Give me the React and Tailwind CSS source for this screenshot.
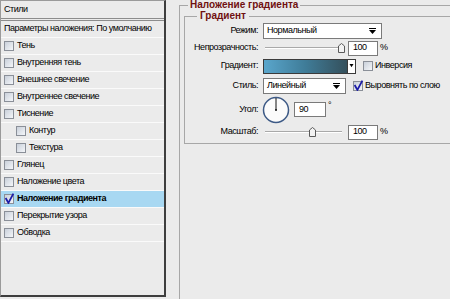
const layers = [
  { label: 'Тень' },
  { label: 'Внутренняя тень' },
  { label: 'Внешнее свечение' },
  { label: 'Внутреннее свечение' },
  { label: 'Тиснение' },
  { label: 'Контур', sub: true },
  { label: 'Текстура', sub: true },
  { label: 'Глянец' },
  { label: 'Наложение цвета' },
  { label: 'Наложение градиента', active: true },
  { label: 'Перекрытие узора' },
  { label: 'Обводка' },
];

function Check({ checked }) {
  return (
    <span className="relative flex h-[10px] w-[10px] shrink-0 border border-[#8a8f98] bg-gradient-to-br from-[#c9d0da] to-[#f4f6f9]">
      {checked && (
        <svg viewBox="0 0 10 10" className="absolute -left-px -top-[2px] h-[11px] w-[11px]">
          <path d="M1.5 4.5 L4 9 L8.5 0.5" fill="none" stroke="#1c1ca8" strokeWidth="1.6" />
        </svg>
      )}
    </span>
  );
}

function Arrow() {
  return (
    <svg viewBox="0 0 7 6" className="h-[6px] w-[7px]">
      <rect x="0" y="0" width="7" height="1" fill="#000" />
      <path d="M0 2 L7 2 L3.5 6 Z" fill="#000" />
    </svg>
  );
}

function Select({ value, width }) {
  return (
    <div className={`flex h-[16px] items-center justify-between border border-[#7a7a7a] bg-white pl-[3px] pr-[5px] ${width}`}>
      <span>{value}</span>
      <Arrow />
    </div>
  );
}

function Slider({ at }) {
  return (
    <div className="relative ml-[2px] h-[14px] w-[77px]">
      <div className="absolute left-0 right-0 top-[6px] h-[2px] border-t border-[#a9a9a9] bg-white" />
      <svg viewBox="0 0 7 10" className="absolute top-[2px] h-[10px] w-[7px]" style={{ left: at }}>
        <path d="M0.5 9.5 L0.5 3 L3.5 0.5 L6.5 3 L6.5 9.5 Z" fill="#f2f2f2" stroke="#5a5a5a" />
      </svg>
    </div>
  );
}

function NumBox({ value, width = 'w-[30px]' }) {
  return (
    <div className={`flex h-[15px] items-center border border-[#7a7a7a] bg-white px-[4px] ${width}`}>{value}</div>
  );
}

function Label({ children }) {
  return <div className="w-[78px] shrink-0 whitespace-nowrap pr-[5px] text-right">{children}</div>;
}

export default function App() {
  return (
    <div className="flex h-[299px] w-[450px] overflow-hidden bg-[#ebebeb] text-[9px] tracking-[-0.45px] text-black" style={{ fontFamily: '"Liberation Sans", Arial, sans-serif' }}>
      <div className="flex h-[297px] w-[166px] shrink-0 flex-col border-b-2 border-r-2 border-l border-t border-b-[#3e3e3e] border-l-[#9a9a9a] border-r-[#3e3e3e] border-t-[#9a9a9a]">
        <div className="flex h-[20px] items-center border-b-[3px] border-double border-[#8c8c8c] pl-[3px]">Стили</div>
        <div className="flex h-[17px] items-center whitespace-nowrap border-b border-[#fafafa] pl-[3px]">Параметры наложения: По умолчанию</div>
        {layers.map(({ label, sub, active }) => (
          <div
            key={label}
            className={`flex h-[17px] items-center gap-[3px] whitespace-nowrap border-b border-[#fafafa] ${sub ? 'pl-[15px]' : 'pl-[3px]'} ${active ? 'bg-[#a8d8f2] font-bold' : ''}`}
          >
            <Check checked={active} />
            <span>{label}</span>
          </div>
        ))}
      </div>

      <div className="ml-[13px] flex-1">
        <fieldset className="h-[305px] w-[300px] border-l border-t border-[#a7a7a7]">
          <legend className="ml-[8px] px-[2px] text-[10px] font-bold leading-[10px] tracking-[0px] text-[#701010]">Наложение градиента</legend>
          <fieldset className="ml-[4px] mt-[1px] h-[133px] w-[300px] border-b border-l border-t border-[#a7a7a7]">
            <legend className="ml-[12px] px-[3px] text-[10px] font-bold leading-[10px] tracking-[0px] text-[#701010]">Градиент</legend>
            <div className="flex flex-col pt-[2px]">
              <div className="flex h-[16px] items-center">
                <Label>Режим:</Label>
                <Select value="Нормальный" width="w-[119px]" />
              </div>
              <div className="mt-[1px] flex h-[16px] items-center">
                <Label>Непрозрачность:</Label>
                <Slider at="73px" />
                <div className="ml-[6px]"><NumBox value="100" /></div>
                <span className="ml-[2px]">%</span>
              </div>
              <div className="mt-[2px] flex h-[16px] items-center">
                <Label>Градиент:</Label>
                <div className="flex h-[15px] w-[93px] border border-[#3a3a3a]">
                  <div className="flex-1 bg-gradient-to-r from-[#5aa6cc] via-[#3f7c98] to-[#34505c]" />
                  <div className="flex w-[8px] items-center justify-center border-l border-[#3a3a3a] bg-white">
                    <svg viewBox="0 0 5 5" className="h-[4px] w-[5px]"><path d="M0 0 L5 0 L2.5 4 Z" fill="#000" /></svg>
                  </div>
                </div>
                <div className="ml-[7px] flex items-center gap-[2px]">
                  <Check />
                  <span>Инверсия</span>
                </div>
              </div>
              <div className="mt-[4px] flex h-[16px] items-center">
                <Label>Стиль:</Label>
                <Select value="Линейный" width="w-[83px]" />
                <div className="ml-[7px] flex items-center gap-[2px] whitespace-nowrap">
                  <Check checked />
                  <span>Выровнять по слою</span>
                </div>
              </div>
              <div className="mt-[2px] flex h-[28px] items-start">
                <div className="mt-[7px]"><Label>Угол:</Label></div>
                <svg viewBox="0 0 28 28" className="-ml-[1px] h-[28px] w-[28px]">
                  <circle cx="14" cy="14" r="12.5" fill="#fbfbfb" stroke="#3d5a86" strokeWidth="1.5" />
                  <line x1="14" y1="14" x2="14" y2="2" stroke="#111" strokeWidth="1" />
                  <circle cx="14" cy="14" r="1" fill="#111" />
                </svg>
                <div className="ml-[4px] mt-[6px]"><NumBox value="90" width="w-[32px]" /></div>
                <span className="ml-[2px] mt-[3px]">°</span>
              </div>
              <div className="mt-[1px] flex h-[14px] items-center">
                <Label>Масштаб:</Label>
                <Slider at="44px" />
                <div className="ml-[6px]"><NumBox value="100" /></div>
                <span className="ml-[2px]">%</span>
              </div>
            </div>
          </fieldset>
        </fieldset>
      </div>
    </div>
  );
}
